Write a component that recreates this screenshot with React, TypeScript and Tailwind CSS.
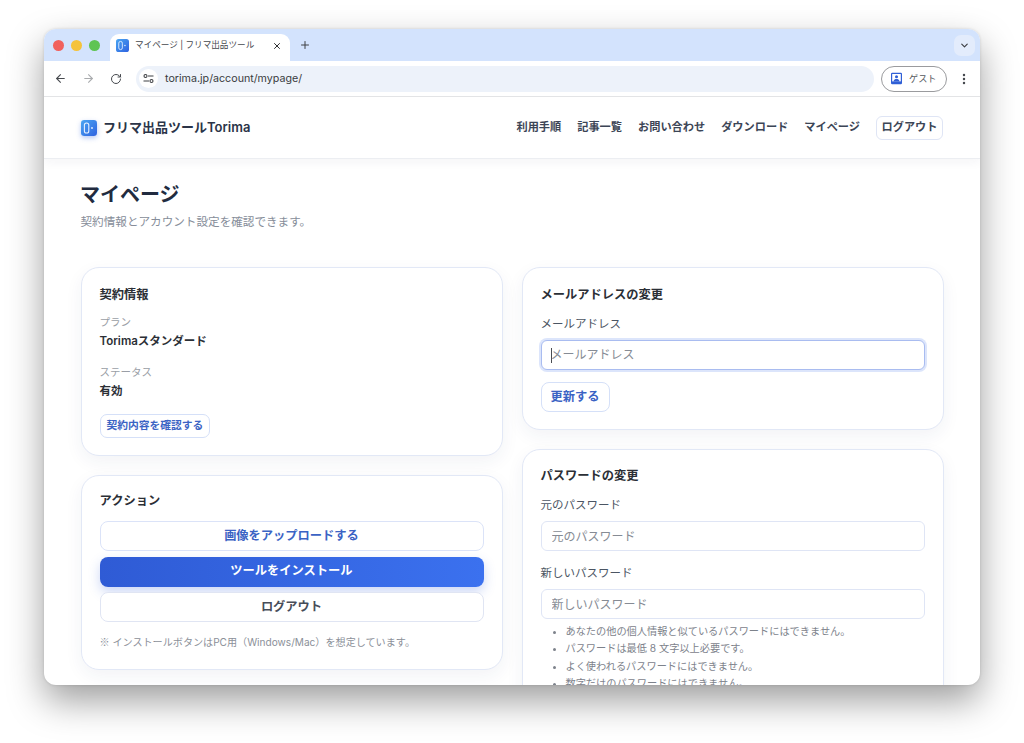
import { ArrowLeft, ArrowRight, ChevronDown, EllipsisVertical, Plus, RotateCw, X } from "lucide-react"

const Logo = ({ size }: { size: number }) => (
  <svg width={size} height={size} viewBox="0 0 16 16" className="shrink-0">
    <defs>
      <linearGradient id={`logo-${size}`} x1="0" y1="0" x2="1" y2="1">
        <stop offset="0" stopColor="#4aa6f2" />
        <stop offset="1" stopColor="#2f62e0" />
      </linearGradient>
    </defs>
    <rect width="16" height="16" rx="3.2" fill={`url(#logo-${size})`} />
    <rect x="3.4" y="3" width="4.4" height="10" rx="2.1" fill="none" stroke="#e6f1ff" strokeWidth="1.1" />
    <circle cx="11" cy="8" r="0.9" fill="#e6f1ff" />
  </svg>
)

const Card = ({ title, className, children }: { title: string; className?: string; children: React.ReactNode }) => (
  <section className={`rounded-[18px] border border-[#e2e8f6] bg-white px-[18px] shadow-[0_6px_18px_rgba(30,50,100,0.06)] ${className ?? ""}`}>
    <h2 className="text-[12.25px] leading-[18px] font-semibold text-[#2b2f36]">{title}</h2>
    {children}
  </section>
)

const Field = ({ label, className }: { label: string; className?: string }) => (
  <div className={className}>
    <div className="text-[11.5px] leading-[18px] text-[#4b5563]">{label}</div>
    <input
      placeholder={label}
      className="mt-[7px] block h-[30px] w-full rounded-[6px] border border-[#dfe5f5] bg-white px-[10px] text-[12px] outline-none placeholder:text-[#868b94]"
    />
  </div>
)

const BlockButton = ({ children, className }: { children: React.ReactNode; className: string }) => (
  <button className={`flex h-[30px] w-full items-center justify-center rounded-[8px] text-[12.25px] font-semibold ${className}`}>{children}</button>
)

const navItems = ["利用手順", "記事一覧", "お問い合わせ", "ダウンロード", "マイページ"]

const rules = [
  "あなたの他の個人情報と似ているパスワードにはできません。",
  "パスワードは最低 8 文字以上必要です。",
  "よく使われるパスワードにはできません。",
  "数字だけのパスワードにはできません。",
]

export default function App() {
  return (
    <div
      className="h-[743px] w-[1024px] overflow-hidden bg-white pt-[29px] pl-[44px]"
      style={{ fontFamily: 'Inter, "Noto Sans CJK JP", sans-serif' }}
    >
      <div className="flex h-[656px] w-[936px] flex-col overflow-hidden rounded-[12px] bg-white shadow-[0_16px_36px_rgba(0,0,0,0.38),0_0_3px_rgba(0,0,0,0.14)]">
        {/* tab strip */}
        <div className="flex h-[32px] shrink-0 items-end bg-[#d3e3fd]">
          <div className="ml-[9px] flex h-[27px] items-center gap-[7px] self-end pb-[4px]">
            <span className="size-[11px] rounded-full bg-[#f1615d]" />
            <span className="size-[11px] rounded-full bg-[#f5c33b]" />
            <span className="size-[11px] rounded-full bg-[#5fc454]" />
          </div>
          <div className="ml-[10px] flex h-[27px] w-[180px] items-center rounded-t-[9px] bg-white pr-[8px] pb-[4px] pl-[6px]">
            <Logo size={13} />
            <span className="ml-[6px] flex-1 truncate text-[8.6px] text-[#45484d]">マイページ | フリマ出品ツール</span>
            <X size={10} strokeWidth={2.4} className="text-[#2f3033]" />
          </div>
          <Plus size={12} strokeWidth={2} className="mb-[10px] ml-[9px] text-[#3f4145]" />
          <div className="mr-[5px] mb-[5px] ml-auto flex size-[21px] items-center justify-center rounded-[7px] bg-[#e3ecfc]">
            <ChevronDown size={11} strokeWidth={2.6} className="text-[#3f4145]" />
          </div>
        </div>
        {/* toolbar */}
        <div className="flex h-[36px] shrink-0 items-center border-b border-[#e3e4e6] bg-white pl-[10px]">
          <ArrowLeft size={13} strokeWidth={2} className="text-[#474a4f]" />
          <ArrowRight size={13} strokeWidth={2} className="ml-[15px] text-[#a9abae]" />
          <RotateCw size={12} strokeWidth={2} className="ml-[15px] text-[#474a4f]" />
          <div className="ml-[14px] flex h-[26px] w-[738px] items-center rounded-full bg-[#edf2fa] pl-[3px]">
            <span className="flex size-[19px] items-center justify-center rounded-full bg-white">
              <svg width="11" height="11" viewBox="0 0 11 11" fill="none" stroke="#3f4145" strokeWidth="1.1">
                <path d="M5 3H10.5M0.5 8H6" />
                <circle cx="2.5" cy="3" r="1.5" />
                <circle cx="8.5" cy="8" r="1.5" />
              </svg>
            </span>
            <span className="ml-[7px] pt-[1px] text-[10.7px] text-[#3a3c40]">torima.jp/account/mypage/</span>
          </div>
          <div className="ml-[7px] flex h-[26px] w-[66px] items-center gap-[6px] rounded-full border border-[#9a9b9e] pl-[8px]">
            <svg width="13" height="13" viewBox="0 0 13 13" className="shrink-0">
              <rect x="1" y="0.8" width="11" height="11.4" rx="1.2" fill="#2f5fd6" />
              <rect x="2.2" y="2" width="8.6" height="7.4" fill="#ffffff" />
              <circle cx="6.5" cy="4.8" r="1.5" fill="#2f5fd6" />
              <path d="M3.4 9.4c.5-1.8 1.7-2.4 3.1-2.4s2.6.6 3.1 2.4z" fill="#2f5fd6" />
            </svg>
            <span className="text-[9.2px] text-[#55585d]">ゲスト</span>
          </div>
          <EllipsisVertical size={14} strokeWidth={2.2} className="ml-[10px] text-[#474a4f]" />
        </div>
        {/* site */}
        <div className="min-h-0 flex-1 overflow-hidden">
          <header className="flex h-[62px] items-center justify-between border-b border-[#eceef2] bg-white px-[37px] shadow-[0_3px_10px_rgba(30,40,70,0.05)]">
            <div className="flex items-center gap-[6px]">
              <span className="rounded-[3px] shadow-[0_2px_5px_rgba(47,98,224,0.35)]">
                <Logo size={16} />
              </span>
              <span className="pt-[1px] text-[13px] font-semibold text-[#2b3448]">フリマ出品ツールTorima</span>
            </div>
            <nav className="flex items-center gap-[16px] text-[11.2px] font-semibold text-[#3c4556]">
              {navItems.map((item) => (
                <a key={item}>{item}</a>
              ))}
              <button className="h-[24px] w-[67px] rounded-[6px] border border-[#dfe5f5] text-[11.2px] font-semibold text-[#3c4556]">ログアウト</button>
            </nav>
          </header>
          <main className="px-[36.5px]">
            <h1 className="mt-[21px] -ml-[0.5px] text-[20px] leading-[30px] font-bold text-[#212b3f]">マイページ</h1>
            <p className="mt-[3px] text-[11.6px] leading-[18px] text-[#868d99]">契約情報とアカウント設定を確認できます。</p>
            <div className="mt-[36px] grid grid-cols-[422px_422px] items-start gap-x-[19px]">
              <div className="flex flex-col gap-[19px]">
                <Card title="契約情報" className="h-[189px] pt-[18px]">
                  <div className="mt-[11px] text-[10.5px] leading-[16px] text-[#9a9ea6]">プラン</div>
                  <div className="mt-[1px] text-[11.5px] leading-[18px] font-semibold text-[#2b2f36]">Torimaスタンダード</div>
                  <div className="mt-[15px] text-[10.5px] leading-[16px] text-[#9a9ea6]">ステータス</div>
                  <div className="mt-[1px] text-[11.5px] leading-[18px] font-semibold text-[#2b2f36]">有効</div>
                  <button className="mt-[14px] h-[24px] rounded-[7px] border border-[#d5e0f8] px-[6px] text-[10.75px] font-semibold text-[#3b63c4]">契約内容を確認する</button>
                </Card>
                <Card title="アクション" className="h-[195px] pt-[16px]">
                  <div className="mt-[11px] flex flex-col gap-[5.5px]">
                    <BlockButton className="border border-[#dbe3f8] bg-white text-[#3b63c4]">画像をアップロードする</BlockButton>
                    <BlockButton className="bg-gradient-to-r from-[#2f5bd5] to-[#3b71ef] text-white shadow-[0_5px_12px_rgba(50,95,220,0.25)]">ツールをインストール</BlockButton>
                    <BlockButton className="border border-[#e0e5f3] bg-white text-[#474d59]">ログアウト</BlockButton>
                  </div>
                  <p className="mt-[12px] text-[10.1px] leading-[16px] text-[#8b9099]">
                    <span className="font-['Noto_Sans_CJK_JP']">※</span> インストールボタンはPC用（Windows/Mac）を想定しています。
                  </p>
                </Card>
              </div>
              <div className="flex flex-col gap-[19px]">
                <Card title="メールアドレスの変更" className="h-[163px] pt-[18px]">
                  <div className="mt-[11px] text-[11.5px] leading-[18px] text-[#4b5563]">メールアドレス</div>
                  <div className="mt-[7px] flex h-[30px] items-center rounded-[6px] border border-[#a9bcf0] bg-white pl-[9px] text-[12px] text-[#868b94] shadow-[0_0_0_2px_rgba(130,160,240,0.28)]">
                    <span className="-mr-[1px] h-[15px] w-px bg-[#4a4d52]" />
                    メールアドレス
                  </div>
                  <button className="mt-[12px] h-[30px] rounded-[8px] border border-[#d5e0f8] px-[9px] text-[12.25px] font-semibold text-[#3b63c4]">更新する</button>
                </Card>
                <Card title="パスワードの変更" className="pt-[17px]">
                  <Field label="元のパスワード" className="mt-[11px]" />
                  <Field label="新しいパスワード" className="mt-[13px]" />
                  <ul className="mt-[4px] list-disc pb-[40px] pl-[25px] text-[10.2px] leading-[17.4px] text-[#7d828b]">
                    {rules.map((rule) => (
                      <li key={rule}>{rule}</li>
                    ))}
                  </ul>
                </Card>
              </div>
            </div>
          </main>
        </div>
      </div>
    </div>
  )
}
